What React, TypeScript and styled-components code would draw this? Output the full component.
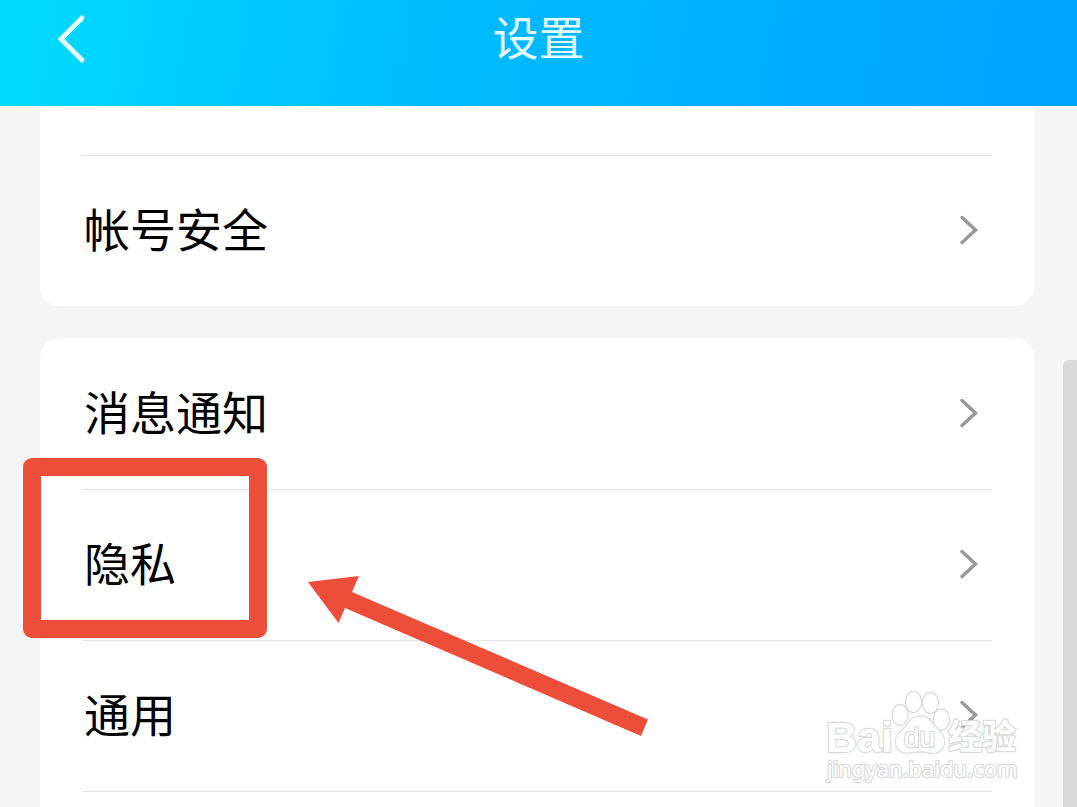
import React from "react";
import styled, { createGlobalStyle } from "styled-components";

const GlobalStyle = createGlobalStyle`
  *, *::before, *::after { box-sizing: border-box; }
  body {
    margin: 0;
    background: #f5f5f5;
    color: #000;
    font-family: "Noto Sans CJK SC", sans-serif;
  }
`;

const Page = styled.div`
  position: relative;
  height: 100vh;
  overflow: hidden;
  display: flex;
  flex-direction: column;
`;

const Header = styled.header`
  flex: none;
  display: grid;
  grid-template-columns: 1fr auto 1fr;
  align-items: center;
  padding: 1px 52px 29px;
  background: linear-gradient(100deg, #00dcff 0%, #00beff 36%, #00a3ff 95%);
`;

const Title = styled.h1`
  margin: 0;
  padding-bottom: 8px;
  font-size: 46px;
  line-height: 68px;
  font-weight: 400;
  color: #e4fbff;
`;

const BackButton = styled.button`
  display: flex;
  justify-self: start;
  padding: 0;
  border: 0;
  background: none;
  color: #e4fbff;
  cursor: pointer;
`;

const Content = styled.main`
  flex: 1;
  min-height: 0;
  display: flex;
  flex-direction: column;
  gap: 32px;
  padding: 0 43px 0 40px;
`;

const Card = styled.ul<{ $continued?: boolean }>`
  flex: none;
  list-style: none;
  margin: 0;
  padding: ${(p) => (p.$continued ? "49px" : "0")} 42px 0;
  background: #fff;
  border-radius: ${(p) => (p.$continued ? "0 0 20px 20px" : "20px")};
`;

const Item = styled.li<{ $divided?: boolean }>`
  position: relative;
  border-top: 1px solid ${(p) => (p.$divided ? "#e4e4e4" : "transparent")};
`;

const RowButton = styled.button`
  display: flex;
  align-items: center;
  justify-content: space-between;
  width: 100%;
  height: 150px;
  padding: 0 12px 2px 2px;
  border: 0;
  background: none;
  color: inherit;
  font: inherit;
  font-size: 46px;
  line-height: 68px;
  text-align: left;
  cursor: pointer;
`;

const Label = styled.span`
  padding-bottom: 6px;
`;

const Highlight = styled.span`
  position: absolute;
  z-index: 1;
  top: -32px;
  left: -59px;
  width: 244px;
  height: 180px;
  border: 18px solid #ec4e39;
  border-radius: 9px;
  pointer-events: none;
`;

const Arrow = styled.svg`
  position: absolute;
  z-index: 1;
  top: 86px;
  left: 226px;
  pointer-events: none;
`;

const ScrollThumb = styled.div`
  position: absolute;
  top: 360px;
  right: 0;
  bottom: 0;
  width: 14px;
  border-radius: 6px 0 0 0;
  background: #dadada;
`;

const Watermark = styled.svg`
  position: absolute;
  right: 52px;
  bottom: 21px;
  opacity: 0.9;
  paint-order: stroke;
  pointer-events: none;
`;

const Chevron = () => (
  <svg width="22" height="32" viewBox="0 0 22 32" fill="none" aria-hidden="true">
    <path d="M4 3.500 17.500 16 4 28.500" stroke="#999" strokeWidth="3.500" strokeLinecap="round" />
  </svg>
);

const Row = ({ label, divided, children }: { label: string; divided?: boolean; children?: React.ReactNode }) => (
  <Item $divided={divided}>
    <RowButton type="button">
      <Label>{label}</Label>
      <Chevron />
    </RowButton>
    {children}
  </Item>
);

const BaiduWatermark = () => (
  <Watermark width="200" height="96" viewBox="0 0 200 96" fill="#fff" stroke="#d8d8d8" strokeWidth="2.500" strokeLinejoin="round" aria-label="Baidu">
    <text x="1" y="62" fontFamily="Liberation Sans, sans-serif" fontSize="43" fontWeight="700">Bai</text>
    <ellipse cx="75" cy="25" rx="7.500" ry="10" />
    <ellipse cx="88.500" cy="12" rx="7.500" ry="10" />
    <ellipse cx="105.500" cy="13" rx="7.500" ry="10" />
    <ellipse cx="116.500" cy="29.500" rx="7.500" ry="10" />
    <path d="M95 26.500c-7 0-10 4-13 9-3 4-10 8-11 15-1 8 6 13 13 12 7-1 13-2 20 0 8 2 15-3 15-11 0-8-7-12-11-17-3-5-6-8-13-8Z" />
    <text x="79" y="57" fontFamily="Liberation Sans, sans-serif" fontSize="28">du</text>
    <text x="123" y="59" fontFamily="Noto Sans CJK SC, sans-serif" fontSize="34" fontWeight="700">经验</text>
    <text x="2" y="87" fontFamily="Noto Sans, sans-serif" fontSize="22">jingyan.baidu.com</text>
  </Watermark>
);

export default function App() {
  return (
    <Page>
      <GlobalStyle />
      <Header>
        <BackButton type="button" aria-label="返回">
          <svg width="36" height="52" viewBox="0 0 36 52" fill="none" aria-hidden="true">
            <path d="M30 5 9 26 30 47" stroke="currentColor" strokeWidth="5" strokeLinecap="round" />
          </svg>
        </BackButton>
        <Title>设置</Title>
      </Header>
      <Content>
        <Card $continued>
          <Row label="帐号安全" divided />
        </Card>
        <Card>
          <Row label="消息通知" />
          <Row label="隐私" divided>
            <Highlight />
            <Arrow width="342" height="162" viewBox="0 0 342 162" aria-hidden="true">
              <path d="M0 6 51 0 44 16 340 143.500 333 160 37 32 30.500 47Z" fill="#ec4e39" />
            </Arrow>
          </Row>
          <Row label="通用" divided />
          <Row label="" divided />
        </Card>
      </Content>
      <ScrollThumb />
      <BaiduWatermark />
    </Page>
  );
}
